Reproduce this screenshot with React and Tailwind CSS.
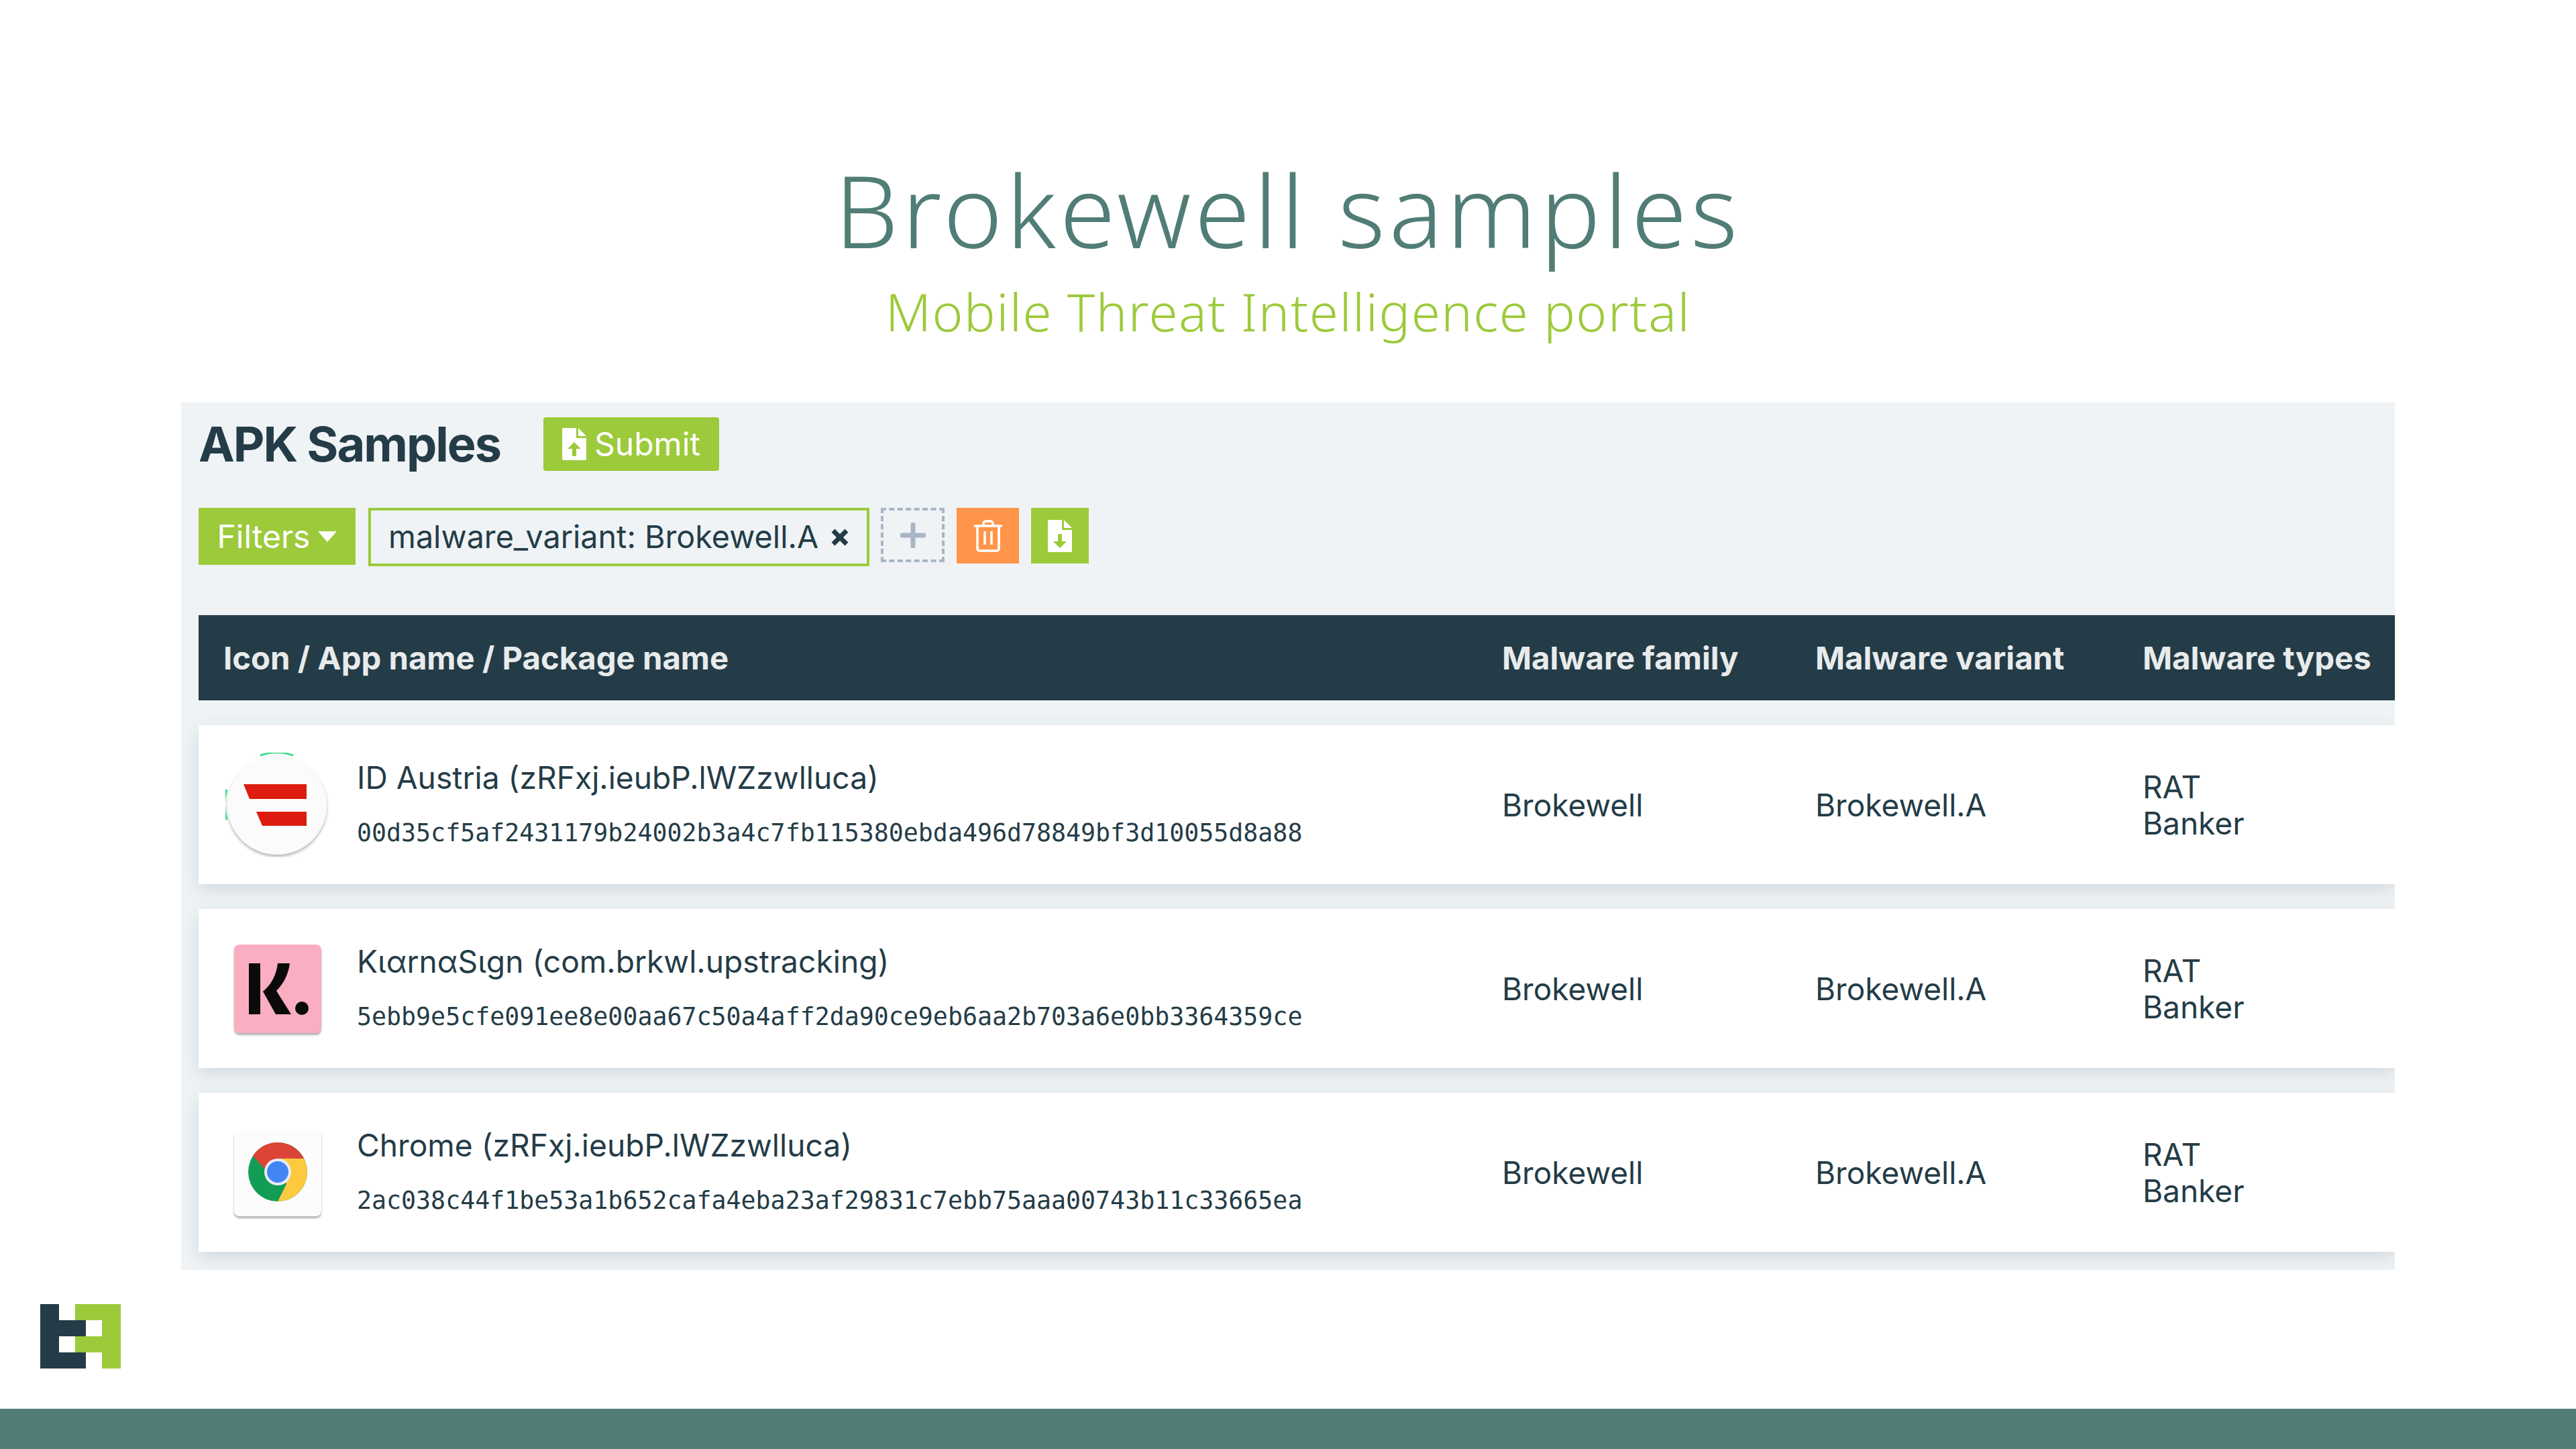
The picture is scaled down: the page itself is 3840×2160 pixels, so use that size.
const COLS = 'grid grid-cols-[1943px_467px_488px_1fr]'

const ROWS = [
  {
    name: 'ID Austria (zRFxj.ieubP.lWZzwlluca)',
    hash: '00d35cf5af2431179b24002b3a4c7fb115380ebda496d78849bf3d10055d8a88',
    icon: 'austria',
  },
  {
    name: 'KιαrnαSιgn (com.brkwl.upstracking)',
    hash: '5ebb9e5cfe091ee8e00aa67c50a4aff2da90ce9eb6aa2b703a6e0bb3364359ce',
    icon: 'klarna',
  },
  {
    name: 'Chrome (zRFxj.ieubP.lWZzwlluca)',
    hash: '2ac038c44f1be53a1b652cafa4eba23af29831c7ebb75aaa00743b11c33665ea',
    icon: 'chrome',
  },
]

function AustriaIcon() {
  return (
    <svg width="156" height="156" viewBox="0 0 156 156">
      <defs>
        <filter id="austria-shadow" x="-10%" y="-10%" width="120%" height="120%">
          <feDropShadow dx="0" dy="3" stdDeviation="2" floodColor="#000" floodOpacity="0.3" />
        </filter>
      </defs>
      <path d="M52 4A76 76 0 0 1 101 4" fill="none" stroke="#3ddc84" strokeWidth="3" />
      <path d="M2 55A76 76 0 0 0 2 100" fill="none" stroke="#3ddc84" strokeWidth="3" />
      <circle cx="77" cy="78" r="74" fill="#fbfbfb" filter="url(#austria-shadow)" />
      <polygon points="27,47 121,47 121,69 36,69" fill="#dc1c0e" />
      <polygon points="46,88 121,88 121,109 55,109" fill="#dc1c0e" />
    </svg>
  )
}

function KlarnaIcon() {
  return (
    <div className="w-[130px] h-[132px] rounded-[8px] bg-[#fbaec1] shadow-[0_3px_3px_rgba(0,0,0,0.3)]">
      <svg width="130" height="132" viewBox="0 0 130 132">
        <rect x="22" y="28" width="17" height="76" fill="#0a0a0a" />
        <path d="M65 28h18c-2 16-9 30-20 41l22 35H62L43 70c12-10 20-24 22-42z" fill="#0a0a0a" />
        <circle cx="101" cy="95" r="10" fill="#0a0a0a" />
      </svg>
    </div>
  )
}

function ChromeIcon() {
  return (
    <div className="mt-[3px] w-[130px] h-[128px] rounded-[8px] bg-[#fcfcfc] shadow-[0_3px_3px_rgba(0,0,0,0.3)]">
      <svg width="130" height="128" viewBox="0 0 130 128">
        <circle cx="65" cy="62" r="44" fill="#129d54" />
        <path d="M65 18A44 44 0 0 1 104 42H65L46 58 28 38A44 44 0 0 1 65 18z" fill="#db4437" />
        <path d="M65 42H104A44 44 0 0 1 65 106L78 80z" fill="#fdc93e" />
        <circle cx="65" cy="62" r="20" fill="#e8ecf2" />
        <circle cx="65" cy="62" r="16" fill="#4286f5" />
      </svg>
    </div>
  )
}

function RowIcon({ icon }) {
  if (icon === 'austria') return <AustriaIcon />
  if (icon === 'klarna') return <KlarnaIcon />
  return <ChromeIcon />
}

function FileArrow({ up, arrow }) {
  return (
    <svg width="36" height="48" viewBox="0 0 36 48">
      <path d="M2 0h19v15h15v31a2 2 0 0 1-2 2H2a2 2 0 0 1-2-2V2a2 2 0 0 1 2-2z" fill="#fff" />
      <path d="M24 0l12 12H24z" fill="#fff" />
      {up ? (
        <path d="M18 21l10 10h-7v11h-6V31H8z" fill={arrow} />
      ) : (
        <path d="M15 21h6v11h7L18 42 8 32h7z" fill={arrow} />
      )}
    </svg>
  )
}

function Logo() {
  return (
    <svg width="120" height="96" viewBox="0 0 120 96">
      <path d="M52 0h68v96H92V72H52V48h40V24H52z" fill="#9cca3b" />
      <path d="M0 0h28v24h40v24H28v24h40v24H0z" fill="#243c47" />
    </svg>
  )
}

function SampleRow({ row }) {
  return (
    <div className={`${COLS} h-[237px] bg-white items-center text-[46px] leading-[54px] text-[#243c47] shadow-[0_8px_24px_rgba(36,60,71,0.14)]`}>
      <div className="flex items-center">
        <div className="w-[236px] shrink-0 flex justify-center">
          <RowIcon icon={row.icon} />
        </div>
        <div className="flex flex-col gap-[31px]">
          <span className="text-[46.2px]">{row.name}</span>
          <span className="font-['DejaVu_Sans_Mono',monospace] text-[36.6px] leading-[50px]">{row.hash}</span>
        </div>
      </div>
      <div>Brokewell</div>
      <div>Brokewell.A</div>
      <div className="flex flex-col">
        <span>RAT</span>
        <span>Banker</span>
      </div>
    </div>
  )
}

export default function App() {
  return (
    <div className="w-[3840px] h-[2160px] bg-white flex flex-col font-['Inter',sans-serif] overflow-hidden">
      {/* Title */}
      <div className="h-[600px] shrink-0 flex flex-col items-center pt-[232px]">
        <h1 className="font-['Noto_Sans',sans-serif] font-light text-[150px] leading-[160px] tracking-[5.5px] text-[#507d76]">Brokewell samples</h1>
        <p className="font-['Noto_Sans',sans-serif] font-light text-[78px] leading-[100px] tracking-[1.5px] text-[#9cca3b] mt-[22px]">Mobile Threat Intelligence portal</p>
      </div>

      {/* Panel */}
      <div className="ml-[270px] w-[3300px] h-[1293px] shrink-0 bg-[#eff3f6] pl-[26px] pt-[22px] overflow-hidden">
        <div className="flex items-center gap-[64px] h-[80px]">
          <h2 className="text-[72px] font-bold tracking-[-2px] text-[#243c47]">APK Samples</h2>
          <button className="w-[262px] h-[80px] rounded-[4px] bg-[#9cca3b] text-white text-[48px] flex items-center justify-center gap-[12px]">
            <FileArrow up arrow="#9cca3b" />
            Submit
          </button>
        </div>

        <div className="flex items-start mt-[55px]">
          <button className="w-[234px] h-[85px] bg-[#9cca3b] text-white text-[48px] flex items-center justify-center gap-[12px]">
            Filters
            <svg width="28" height="16" viewBox="0 0 28 16"><path d="M0 0h28L14 16z" fill="#fff" /></svg>
          </button>
          <div className="ml-[19px] w-[747px] h-[87px] border-4 border-[#9cca3b] flex items-center pl-[26px] text-[46.7px] text-[#243c47]">
            malware_variant: Brokewell.A
            <svg className="ml-[18px]" width="28" height="28" viewBox="0 0 28 28"><path d="M4 4l20 20M24 4L4 24" stroke="#243c47" strokeWidth="7" /></svg>
          </div>
          <button className="ml-[17px] w-[95px] h-[81px] border-4 border-dashed border-[#a9b5c4] flex items-center justify-center">
            <svg width="38" height="38" viewBox="0 0 38 38"><path d="M19 3v32M3 19h32" stroke="#a9b5c4" strokeWidth="7" strokeLinecap="round" /></svg>
          </button>
          <button className="ml-[18px] w-[93px] h-[83px] bg-[#ff954a] flex items-center justify-center">
            <svg width="42" height="48" viewBox="0 0 42 48" fill="none" stroke="#fff" strokeWidth="3.5">
              <path d="M1 9h40" strokeLinecap="round" />
              <path d="M14 8V5a3 3 0 0 1 3-3h8a3 3 0 0 1 3 3v3" />
              <path d="M5 9v34a3 3 0 0 0 3 3h26a3 3 0 0 0 3-3V9" />
              <path d="M16 17v20M26 17v20" />
            </svg>
          </button>
          <button className="ml-[18px] w-[86px] h-[83px] bg-[#9cca3b] flex items-center justify-center">
            <FileArrow arrow="#9cca3b" />
          </button>
        </div>

        {/* Table */}
        <div className={`${COLS} mt-[73px] h-[127px] pt-[2px] items-center bg-[#243c47] text-[47.3px] font-bold text-[#e8ebec]`}>
          <div className="pl-[37px]">Icon / App name / Package name</div>
          <div>Malware family</div>
          <div>Malware variant</div>
          <div>Malware types</div>
        </div>
        <div className="flex flex-col gap-[37px] mt-[37px]">
          {ROWS.map((row) => (
            <SampleRow key={row.hash} row={row} />
          ))}
        </div>
      </div>

      {/* Logo + footer bar */}
      <div className="ml-[60px] mt-[51px]">
        <Logo />
      </div>
      <div className="mt-auto h-[60px] bg-[#507d76]" />
    </div>
  )
}
